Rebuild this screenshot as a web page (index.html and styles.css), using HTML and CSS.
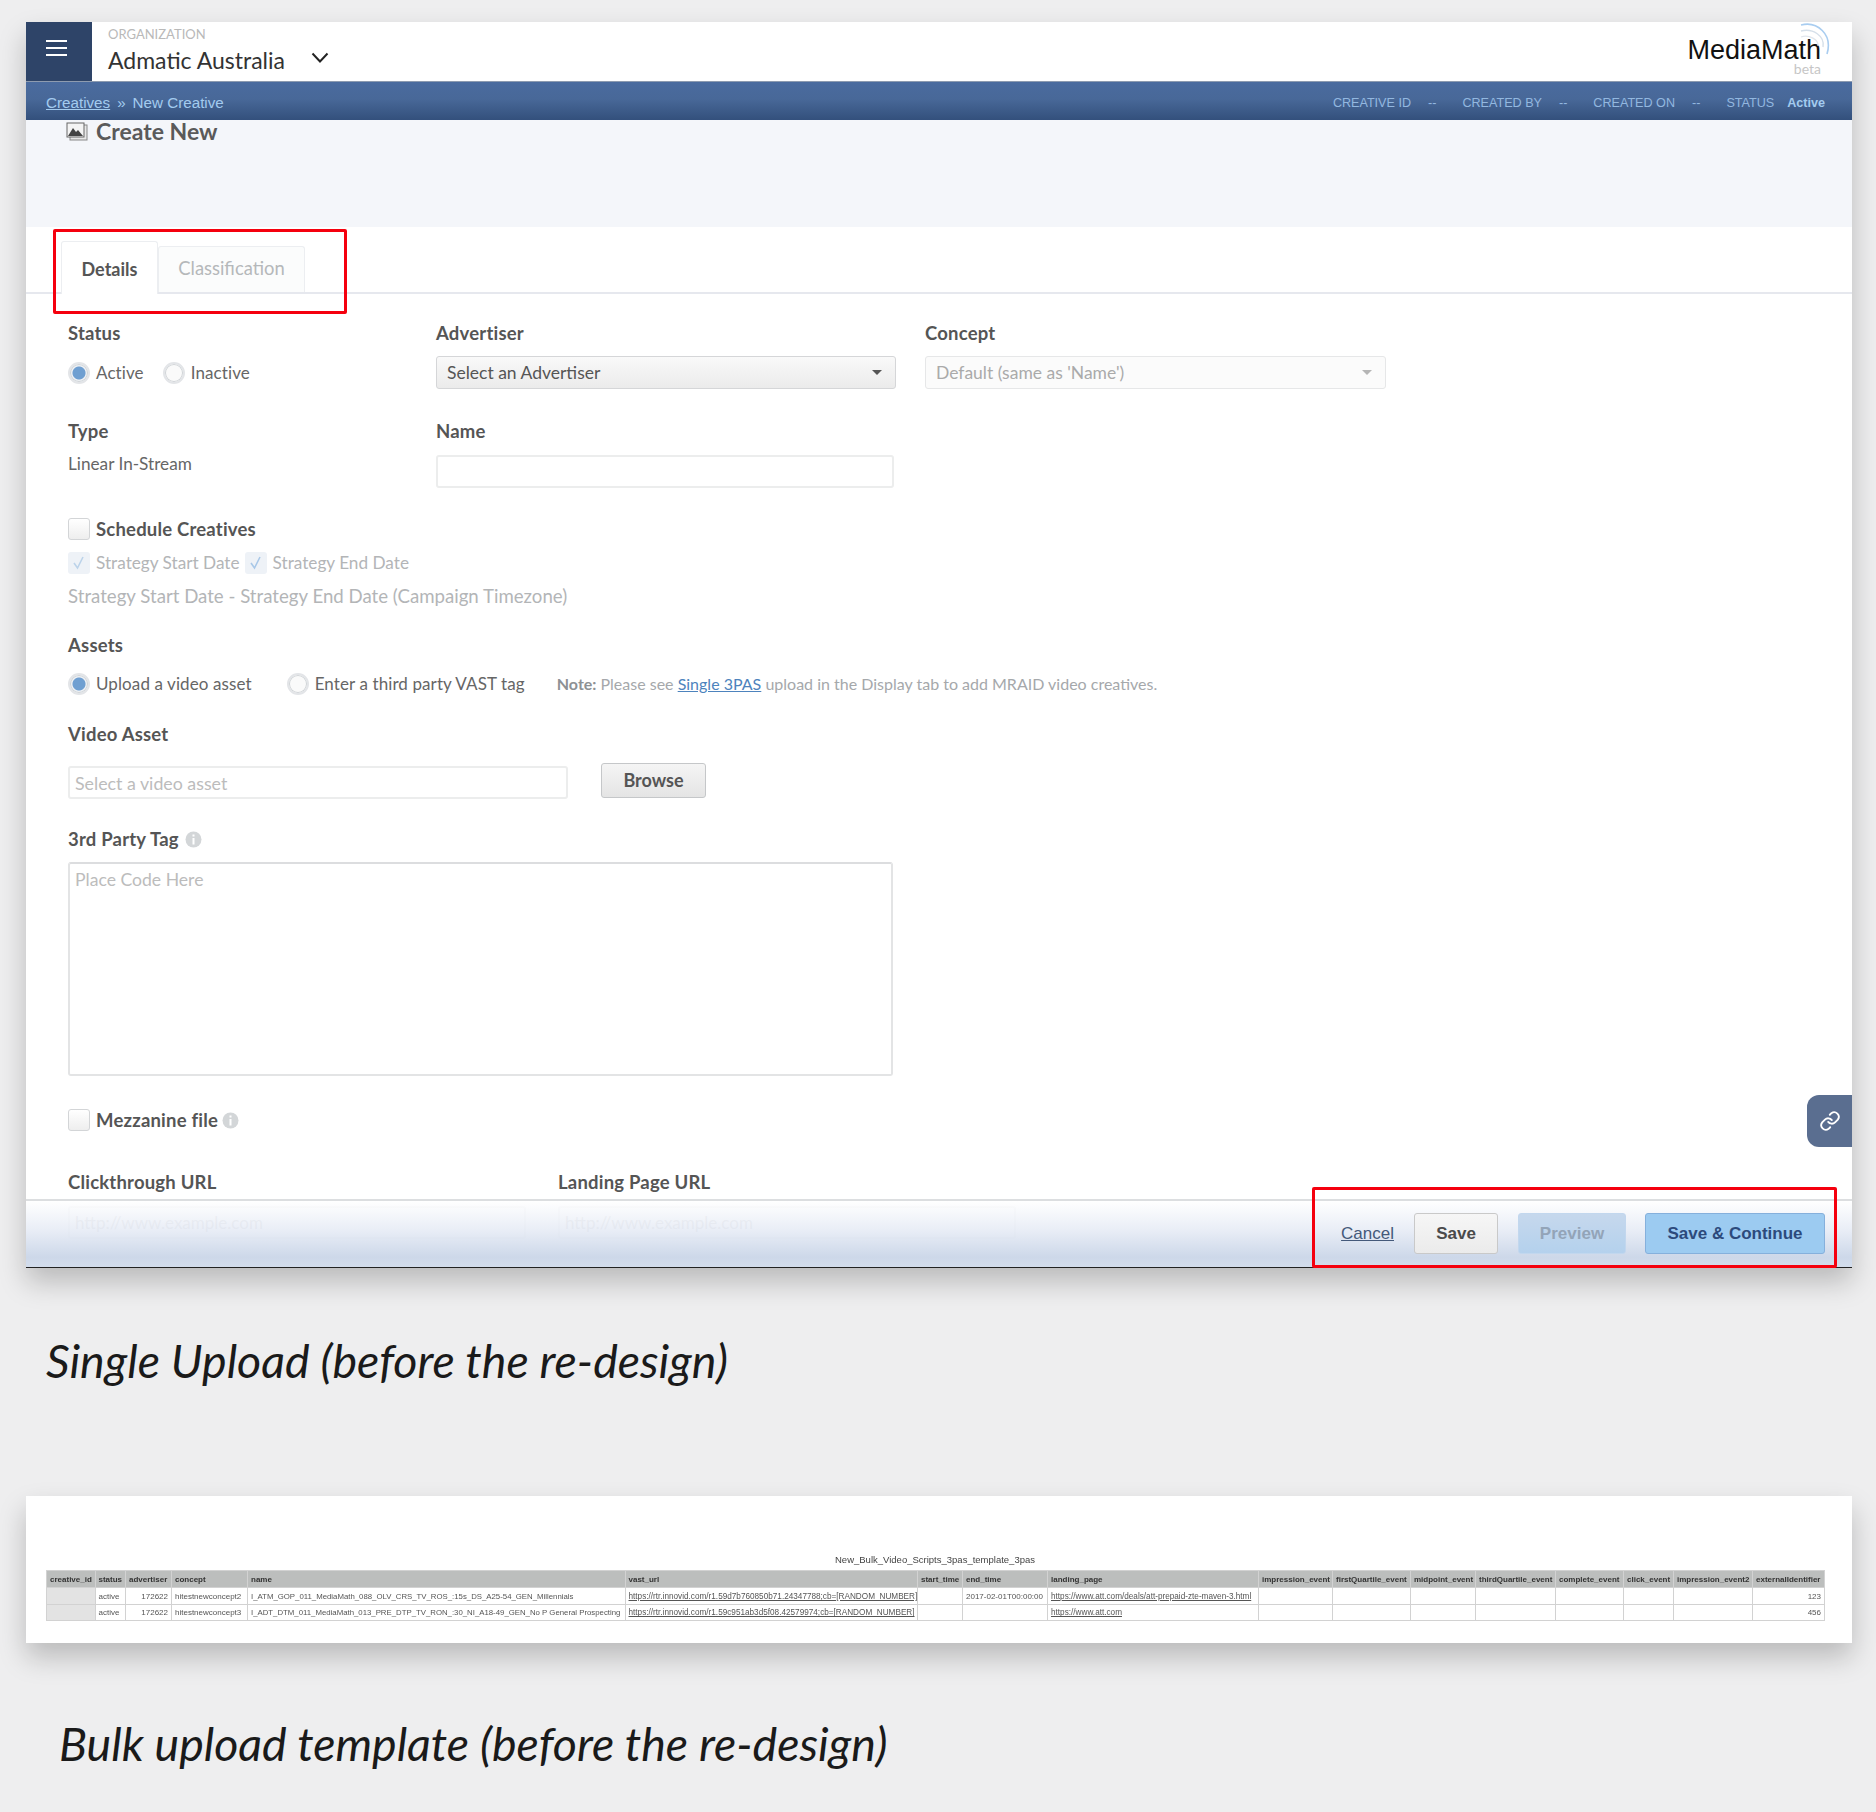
FILE: index.html
```html
<!DOCTYPE html>
<html lang="en">
<head>
    <meta charset="UTF-8">
    <meta name="viewport" content="width=device-width, initial-scale=1.0">
    <title>Single Upload and Bulk Upload</title>
    <link rel="stylesheet" href="styles.css">
</head>
<body>
    <div class="frame app">
        <div class="topbar">
            <div class="burger"><span></span><span></span><span></span></div>
            <div class="org">
                <div class="org-label">ORGANIZATION</div>
                <div class="org-name">Admatic Australia
                    <svg class="org-chevron" width="18" height="11" viewBox="0 0 18 11"><path d="M1.5 1.5 L9 9.5 L16.5 1.5" fill="none" stroke="#222" stroke-width="2"/></svg>
                </div>
            </div>
            <div class="logo">
                <svg class="logo-arcs" width="36" height="36" viewBox="0 0 36 36">
                    <path d="M4 3 C20 -1 36 12 30 32" fill="none" stroke="#a9cdf0" stroke-width="1.6"/>
                    <path d="M4 9 C16 6 28 14 26 25" fill="none" stroke="#d5dfe9" stroke-width="1.4"/>
                    <path d="M4 15 C12 12 22 18 21 24" fill="none" stroke="#e1e6ec" stroke-width="1.2"/>
                </svg>
                <div class="logo-name">MediaMath</div>
                <div class="logo-beta">beta</div>
            </div>
        </div>

        <div class="navbar">
            <div class="crumbs"><a href="#">Creatives</a><span class="crumb-sep">»</span><span>New Creative</span></div>
            <div class="meta">
                <span class="meta-key meta-id">CREATIVE ID</span><span class="meta-val">--</span>
                <span class="meta-key">CREATED BY</span><span class="meta-val">--</span>
                <span class="meta-key">CREATED ON</span><span class="meta-val">--</span>
                <span class="meta-key">STATUS</span><span class="meta-status">Active</span>
            </div>
        </div>

        <div class="page-head">
            <svg class="head-icon" width="22" height="19" viewBox="0 0 22 19">
                <rect x="4" y="3" width="17" height="15" fill="#e8e8e8" stroke="#888"/>
                <rect x="1" y="1" width="17" height="14" fill="#f4f4f4" stroke="#666"/>
                <path d="M2 14 L7 6 L10 10 L12 8 L17 14 Z" fill="#444"/>
            </svg>
            <span>Create New</span>
        </div>

        <div class="tabs">
            <div class="tab tab-on">Details</div>
            <div class="tab tab-off">Classification</div>
        </div>

        <div class="form">
            <div class="cols row-status">
                <div class="col-a">
                    <div class="label">Status</div>
                    <div class="choices">
                        <span class="radio radio-on"></span><span class="choice-text">Active</span>
                        <span class="radio radio-inactive"></span><span class="choice-text">Inactive</span>
                    </div>
                </div>
                <div class="col-b">
                    <div class="label">Advertiser</div>
                    <div class="select">Select an Advertiser<span class="caret"></span></div>
                </div>
                <div class="col-c">
                    <div class="label">Concept</div>
                    <div class="select select-off">Default (same as 'Name')<span class="caret caret-off"></span></div>
                </div>
            </div>

            <div class="cols row-type">
                <div class="col-a">
                    <div class="label">Type</div>
                    <div class="type-value">Linear In-Stream</div>
                </div>
                <div class="col-b">
                    <div class="label">Name</div>
                    <input class="field field-name" type="text">
                </div>
            </div>

            <div class="check-row row-schedule">
                <span class="check"></span><span class="label">Schedule Creatives</span>
            </div>
            <div class="check-row row-strategy">
                <span class="check check-off"><svg width="16" height="16" viewBox="0 0 16 16"><path d="M3 8 L6.500 13 L12 2" fill="none" stroke="#bcd3ea" stroke-width="1.6"/></svg></span>
                <span class="muted">Strategy Start Date</span>
                <span class="check check-off check-second"><svg width="16" height="16" viewBox="0 0 16 16"><path d="M3 8 L6.500 13 L12 2" fill="none" stroke="#a9c8e8" stroke-width="1.6"/></svg></span>
                <span class="muted">Strategy End Date</span>
            </div>
            <div class="muted range">Strategy Start Date - Strategy End Date (Campaign Timezone)</div>

            <div class="label row-assets">Assets</div>
            <div class="choices row-asset-choice">
                <span class="radio radio-on"></span><span class="choice-text">Upload a video asset</span>
                <span class="radio radio-vast"></span><span class="choice-text">Enter a third party VAST tag</span>
                <span class="note"><b>Note:</b> Please see <a href="#">Single 3PAS</a> upload in the Display tab to add MRAID video creatives.</span>
            </div>

            <div class="label row-video">Video Asset</div>
            <div class="video-row">
                <input class="field field-video" type="text" placeholder="Select a video asset">
                <div class="btn-browse">Browse</div>
            </div>

            <div class="label row-tag">3rd Party Tag
                <svg class="info" width="17" height="17" viewBox="0 0 17 17"><circle cx="8.500" cy="8.500" r="8" fill="#d3d6d8"/><rect x="7.500" y="7" width="2" height="6.500" fill="#fff"/><rect x="7.500" y="3.500" width="2" height="2" fill="#fff"/></svg>
            </div>
            <textarea class="code" placeholder="Place Code Here"></textarea>

            <div class="check-row row-mezz">
                <span class="check"></span><span class="label">Mezzanine file</span>
                <svg class="info" width="17" height="17" viewBox="0 0 17 17"><circle cx="8.500" cy="8.500" r="8" fill="#d3d6d8"/><rect x="7.500" y="7" width="2" height="6.500" fill="#fff"/><rect x="7.500" y="3.500" width="2" height="2" fill="#fff"/></svg>
            </div>

            <div class="url-row">
                <div>
                    <div class="label">Clickthrough URL</div>
                    <input class="field field-url" type="text" placeholder="http://www.example.com">
                </div>
                <div>
                    <div class="label">Landing Page URL</div>
                    <input class="field field-url" type="text" placeholder="http://www.example.com">
                </div>
            </div>
        </div>

        <div class="footer">
            <a class="cancel" href="#">Cancel</a>
            <div class="btn btn-save">Save</div>
            <div class="btn btn-preview">Preview</div>
            <div class="btn btn-continue">Save &amp; Continue</div>
        </div>

        <div class="link-tab">
            <svg width="22" height="22" viewBox="0 0 24 24" fill="none" stroke="#fff" stroke-width="2" stroke-linecap="round"><path d="M10 13a5 5 0 0 0 7.500.500l3-3a5 5 0 0 0-7-7l-1.700 1.700"/><path d="M14 11a5 5 0 0 0-7.500-.500l-3 3a5 5 0 0 0 7 7l1.700-1.700"/></svg>
        </div>
        <div class="mark mark-tabs"></div>
        <div class="mark mark-actions"></div>
    </div>

    <div class="caption caption-one">Single Upload (before the re-design)</div>

    <div class="frame bulk">
        <div class="sheet-title">New_Bulk_Video_Scripts_3pas_template_3pas</div>
        <table class="sheet">
            <colgroup>
                <col class="w1"><col class="w2"><col class="w3"><col class="w4"><col class="w5"><col class="w6"><col class="w7"><col class="w8"><col class="w9"><col class="w10"><col class="w11"><col class="w12"><col class="w13"><col class="w14"><col class="w15"><col class="w16"><col class="w17">
            </colgroup>
            <tr>
                <th>creative_id</th><th>status</th><th>advertiser</th><th>concept</th><th>name</th><th>vast_url</th><th>start_time</th><th>end_time</th><th>landing_page</th><th>impression_event</th><th>firstQuartile_event</th><th>midpoint_event</th><th>thirdQuartile_event</th><th>complete_event</th><th>click_event</th><th>impression_event2</th><th>externalIdentifier</th>
            </tr>
            <tr>
                <td class="blank"></td><td>active</td><td class="num">172622</td><td>hitestnewconcept2</td><td class="name">I_ATM_GOP_011_MediaMath_088_OLV_CRS_TV_ROS_:15s_DS_A25-54_GEN_Millennials</td><td class="url"><u>https://rtr.innovid.com/r1.59d7b760850b71.24347788;cb=[RANDOM_NUMBER]</u></td><td></td><td>2017-02-01T00:00:00</td><td class="url"><u>https://www.att.com/deals/att-prepaid-zte-maven-3.html</u></td><td></td><td></td><td></td><td></td><td></td><td></td><td></td><td class="num">123</td>
            </tr>
            <tr>
                <td class="blank"></td><td>active</td><td class="num">172622</td><td>hitestnewconcept3</td><td class="name">I_ADT_DTM_011_MediaMath_013_PRE_DTP_TV_RON_:30_NI_A18-49_GEN_No P General Prospecting</td><td class="url"><u>https://rtr.innovid.com/r1.59c951ab3d5f08.42579974;cb=[RANDOM_NUMBER]</u></td><td></td><td></td><td class="url"><u>https://www.att.com</u></td><td></td><td></td><td></td><td></td><td></td><td></td><td></td><td class="num">456</td>
            </tr>
        </table>
    </div>

    <div class="caption caption-two">Bulk upload template (before the re-design)</div>
</body>
</html>
```

FILE: styles.css
```css
* {
    box-sizing: border-box;
}

body {
    margin: 0;
    padding: 22px 24px 0 26px;
    background-color: #eeeeef;
    font-family: "Lato", "Open Sans", sans-serif;
    color: #555;
}

.frame {
    background-color: #fff;
    box-shadow: 0 14px 26px rgba(0, 0, 0, 0.22);
}

.app {
    position: relative;
    height: 1246px;
    overflow: hidden;
}

/* top bar */
.topbar {
    display: flex;
    height: 59px;
}
.burger {
    width: 66px;
    background-color: #2e4468;
    display: flex;
    flex-direction: column;
    gap: 5px;
    padding: 18px 0 0 20px;
}
.burger span {
    display: block;
    width: 21px;
    height: 2px;
    background-color: #fff;
}
.org {
    padding: 4px 0 0 16px;
}
.org-label {
    font-size: 13px;
    line-height: 16px;
    color: #b9b9b9;
}
.org-name {
    display: flex;
    align-items: center;
    gap: 26px;
    font-size: 23px;
    line-height: 30px;
    margin-top: 3px;
    color: #333;
}
.org-chevron {
    margin-top: -5px;
}
.logo {
    margin-left: auto;
    margin-right: 31px;
    position: relative;
    text-align: right;
    padding-top: 16px;
    color: #111;
}
.logo-name {
    font-family: "Liberation Sans", Arial, sans-serif;
    font-size: 27px;
    line-height: 24px;
}
.logo-beta {
    font-size: 14px;
    line-height: 14px;
    color: #c6c6c6;
}
.logo-arcs {
    position: absolute;
    right: -12px;
    top: 0;
}

/* blue bar */
.navbar {
    display: flex;
    align-items: center;
    justify-content: space-between;
    height: 39px;
    padding: 3px 27px 0 20px;
    background: linear-gradient(#4a6b9f 0%, #486898 45%, #33507c 100%);
    border-top: 1px solid #8d9bb0;
    font-family: "Liberation Sans", Arial, sans-serif;
}
.crumbs {
    font-size: 15.200px;
    color: #a3cbef;
}
.crumbs a {
    color: #a3cbef;
}
.crumb-sep {
    margin: 0 7px;
}
.meta {
    display: flex;
    font-size: 12.600px;
    color: #93b8e0;
}
.meta-val {
    margin: 0 26px 0 17px;
}
.meta-status {
    margin-left: 13px;
    font-weight: 700;
    color: #a3cbef;
}

/* page head */
.page-head {
    display: flex;
    gap: 8px;
    height: 107px;
    padding: 0 0 0 40px;
    background-color: #f4f6fa;
    font-size: 23px;
    font-weight: 700;
    line-height: 23px;
    color: #5a5a5a;
}
.head-icon {
    margin-top: 2px;
}

.tabs {
    display: flex;
    align-items: flex-end;
    height: 67px;
    padding-left: 35px;
    border-bottom: 2px solid #e6e8ee;
}
.tab {
    font-size: 18px;
    border: 1px solid #eceef1;
    border-bottom: none;
    border-radius: 3px 3px 0 0;
}
.tab-on {
    width: 97px;
    height: 53px;
    margin-bottom: -2px;
    background-color: #fff;
    text-align: center;
    font-weight: 700;
    line-height: 55px;
    color: #555;
}
.tab-off {
    width: 147px;
    height: 46px;
    background-color: #fbfcfc;
    text-align: center;
    font-size: 18.400px;
    line-height: 43px;
    color: #b5b8ba;
}

/* form */
.form {
    padding: 27px 0 0 42px;
}
.label {
    font-size: 18.500px;
    font-weight: 700;
    letter-spacing: 0.2px;
    line-height: 24px;
    color: #555;
}
.cols {
    display: flex;
}
.col-a {
    width: 368px;
}
.col-b {
    width: 489px;
}
.col-c {
    width: 461px;
}
.choices {
    display: flex;
    align-items: center;
    height: 33px;
    margin-top: 11px;
}
.radio {
    width: 22px;
    height: 22px;
    flex: none;
    border-radius: 50%;
    border: 2px solid #e3e5e8;
    background-color: #fafafa;
    box-shadow: inset 0 0 0 1px #cfd3d6;
}
.radio-on {
    background: radial-gradient(circle, #6f9fd1 0 6px, #edf0f4 7px);
}
.radio-inactive {
    margin-left: 19px;
}
.radio-vast {
    margin-left: 35px;
}
.choice-text {
    margin-left: 6px;
    font-size: 17px;
    letter-spacing: 0.1px;
    color: #666;
}
.note {
    margin-left: 32px;
    font-size: 16px;
    color: #a5a8ab;
}
.note b {
    color: #8d9194;
}
.note a {
    color: #4d83bd;
}
.select {
    position: relative;
    width: 460px;
    height: 33px;
    margin-top: 11px;
    padding-left: 10px;
    border: 1px solid #d5d6d8;
    border-radius: 3px;
    background: linear-gradient(#f9f9f9, #ebebeb);
    font-size: 17.500px;
    line-height: 32px;
    color: #555;
}
.select-off {
    width: 461px;
    background: #fbfbfb;
    border-color: #e6e7e8;
    color: #aaa;
}
.caret {
    position: absolute;
    right: 13px;
    top: 13px;
    border-left: 5px solid transparent;
    border-right: 5px solid transparent;
    border-top: 5px solid #555;
}
.caret-off {
    border-top-color: #b5b5b5;
}
.row-type {
    margin-top: 30px;
}
.type-value {
    margin-top: 9px;
    font-size: 17.200px;
    line-height: 24px;
    color: #666;
}
.field {
    display: block;
    border: 2px solid #eceded;
    border-radius: 3px;
    background-color: #fff;
    padding: 0 5px;
    font-family: "Lato", sans-serif;
    font-size: 17.800px;
    outline: none;
}
.field::placeholder, .code::placeholder {
    color: #bcbcbc;
}
.field-name {
    width: 458px;
    height: 33px;
    margin-top: 12px;
}
.check-row {
    display: flex;
    align-items: center;
}
.check {
    display: flex;
    align-items: center;
    justify-content: center;
    width: 22px;
    height: 22px;
    margin-right: 6px;
    border: 1px solid #d3d5d7;
    border-radius: 3px;
    background: linear-gradient(#fff, #eeeeee);
}
.check-off {
    border: none;
    background: #eef2f7;
}
.check-second {
    margin-left: 5px;
}
.row-schedule {
    margin-top: 29px;
    height: 24px;
}
.row-strategy {
    margin-top: 10px;
    height: 24px;
}
.muted {
    font-size: 17.200px;
    line-height: 24px;
    color: #b3b5b7;
}
.range {
    margin-top: 9px;
    font-size: 18.650px;
}
.row-assets {
    margin-top: 25px;
}
.row-asset-choice {
    margin-top: 10px;
}
.row-video {
    margin-top: 22px;
}
.video-row {
    display: flex;
    align-items: flex-start;
    margin-top: 17px;
}
.field-video {
    width: 500px;
    height: 33px;
    margin-top: 3px;
}
.btn-browse {
    width: 105px;
    height: 35px;
    margin-left: 33px;
    border: 1px solid #c5c7c9;
    border-radius: 3px;
    background: linear-gradient(#f5f5f5, #e4e4e4);
    text-align: center;
    font-size: 18px;
    font-weight: 700;
    line-height: 33px;
    color: #555;
}
.row-tag {
    display: flex;
    align-items: center;
    gap: 6px;
    margin-top: 28px;
}
.code {
    display: block;
    width: 825px;
    height: 214px;
    margin-top: 11px;
    padding: 5px;
    border: 2px solid #e3e4e5;
    border-top-color: #dcdddf;
    border-radius: 3px;
    font-family: "Lato", sans-serif;
    font-size: 17.600px;
    resize: none;
    outline: none;
}
.row-mezz {
    height: 24px;
    margin-top: 32px;
}
.row-mezz .info {
    margin-left: 4px;
}
.url-row {
    display: flex;
    gap: 32px;
    margin-top: 38px;
}
.field-url {
    width: 458px;
    height: 33px;
    margin-top: 12px;
    font-size: 17px;
}

/* sticky footer lies over the last form row */
.footer {
    position: absolute;
    left: 0;
    right: 0;
    bottom: 0;
    height: 69px;
    display: flex;
    align-items: center;
    justify-content: flex-end;
    padding: 0 27px 1px 0;
    border-top: 2px solid #dcdee0;
    border-bottom: 1px solid #222;
    background: linear-gradient(rgba(255, 255, 255, 0.85), rgba(230, 235, 245, 0.9) 45%, #cdd8e9 85%, #d3ddec);
    font-family: "Liberation Sans", Arial, sans-serif;
}
.cancel {
    margin-right: 20px;
    font-size: 17px;
    color: #44597a;
}
.btn {
    height: 41px;
    border-radius: 3px;
    text-align: center;
    font-size: 17px;
    font-weight: 700;
    line-height: 39px;
}
.btn-save {
    width: 84px;
    border: 1px solid #c9c9c9;
    background: linear-gradient(#f6f6f6, #ebebeb);
    color: #4a4a4a;
}
.btn-preview {
    width: 108px;
    margin-left: 20px;
    border: 1px solid #c2d7ee;
    background: linear-gradient(#c6d8ed, #b4d1ed);
    color: #93a4b8;
}
.btn-continue {
    width: 180px;
    margin-left: 19px;
    border: 1px solid #85b0dc;
    background: #9ccbf1;
    color: #2c4a7c;
}

.link-tab {
    position: absolute;
    right: 0;
    top: 1073px;
    display: flex;
    align-items: center;
    justify-content: center;
    width: 45px;
    height: 52px;
    border-radius: 12px 0 0 12px;
    background-color: #5a6e90;
}

/* red annotation boxes */
.mark {
    position: absolute;
    border: 3px solid #f5000e;
    border-radius: 2px;
}
.mark-tabs {
    left: 27px;
    top: 207px;
    width: 294px;
    height: 85px;
}
.mark-actions {
    left: 1286px;
    top: 1165px;
    width: 525px;
    height: 81px;
}

/* captions */
.caption {
    font-family: "Lato", sans-serif;
    font-style: italic;
    font-size: 46.500px;
    line-height: 60px;
    color: #1a1a1a;
}
.caption-one {
    margin: 62px 0 106px 20px;
}
.caption-two {
    margin: 70px 0 0 33px;
}

/* bulk template */
.bulk {
    height: 147px;
    padding: 57px 0 0 20px;
}
.sheet-title {
    width: 1778px;
    height: 17px;
    padding-top: 1px;
    text-align: center;
    font-family: "Liberation Sans", Arial, sans-serif;
    font-size: 9.500px;
    line-height: 12px;
    color: #444;
    filter: blur(0.35px);
}
.sheet {
    width: 1778px;
    table-layout: fixed;
    border-collapse: collapse;
    font-family: "Liberation Sans", Arial, sans-serif;
    font-size: 8px;
    color: #555;
    filter: blur(0.35px);
}
.sheet th, .sheet td {
    height: 16.500px;
    padding: 1px 3px 0;
    border: 1px solid #d2d2d2;
    white-space: nowrap;
    overflow: hidden;
    text-align: left;
}
.sheet th {
    height: 17px;
    background-color: #bcbebd;
    font-weight: 700;
    color: #333;
}
.sheet td.blank {
    background-color: #e3e3e3;
}
.sheet td.num {
    text-align: right;
}
.sheet td.name {
    font-size: 7.800px;
}
.sheet td.url {
    font-size: 8.200px;
}
.w1 { width: 48.500px; }
.w2 { width: 30.500px; }
.w3 { width: 46px; }
.w4 { width: 76px; }
.w5 { width: 377.500px; }
.w6 { width: 292.500px; }
.w7 { width: 45px; }
.w8 { width: 85px; }
.w9 { width: 211px; }
.w10 { width: 74px; }
.w11 { width: 78px; }
.w12 { width: 65px; }
.w13 { width: 80px; }
.w14 { width: 68px; }
.w15 { width: 50px; }
.w16 { width: 79px; }
.w17 { width: 72px; }
```
